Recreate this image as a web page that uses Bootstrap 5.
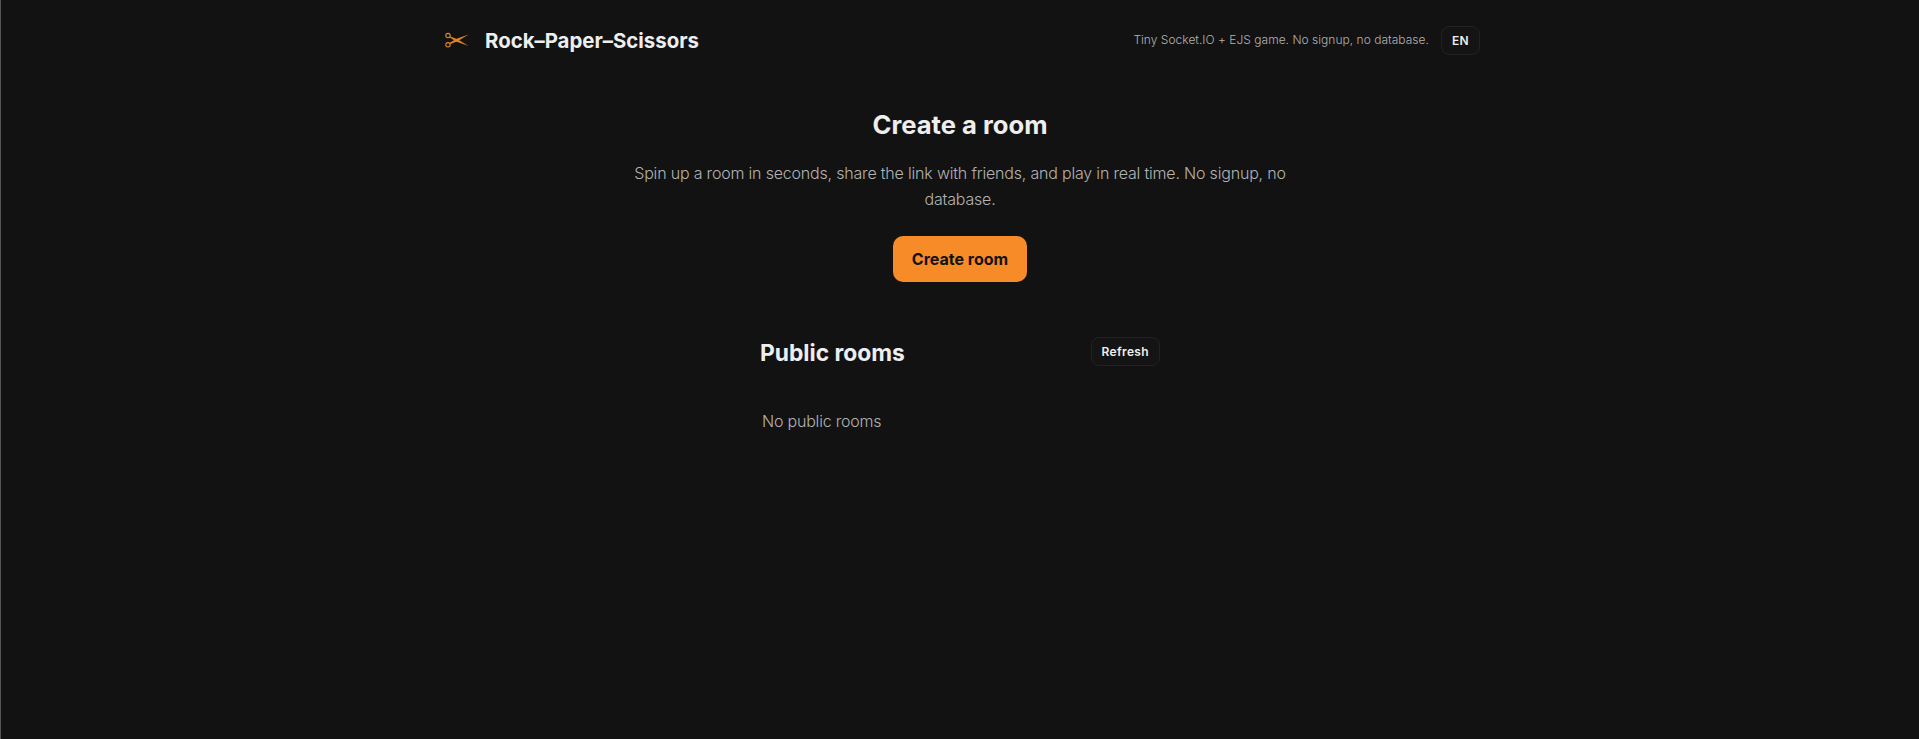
<!DOCTYPE html>
<html lang="en">
<head>
  <meta charset="UTF-8" />
  <meta name="viewport" content="width=device-width, initial-scale=1" />
  <title>Rock–Paper–Scissors</title>
  <link href="https://cdn.jsdelivr.net/npm/bootstrap@5.3.3/dist/css/bootstrap.min.css" rel="stylesheet" />
  <style>
    html, body { height: 100%; }
    body { background: #121212; color: #eeeeee; font-family: Inter, "Liberation Sans", sans-serif; border-left: 1px solid #555; }
    .page-wrap { max-width: 1040px; }
    .top-bar { height: 80px; }
    .brand-name { font-size: 20.4px; font-weight: 700; color: #eeeeee; margin-left: 16px; margin-top: 2px; }
    .tagline { font-size: 12px; font-weight: 300; letter-spacing: .02px; color: #b3b3b3; margin-right: 12px; }
    .btn-ghost { background: #141414; border: 1px solid #222; color: #eeeeee; font-weight: 600; font-size: 12px; letter-spacing: .03em; border-radius: 8px; padding: 0 10px; height: 29px; line-height: 27px; }
    .btn-ghost:hover { background: #1c1c1c; color: #fff; border-color: #333; }
    .hero { padding-top: 28px; }
    .hero-title { font-size: 25.6px; font-weight: 700; line-height: 34px; margin-bottom: 19px; }
    .hero-text { width: 680px; font-size: 16px; font-weight: 300; letter-spacing: -.19px; line-height: 25.6px; color: #b3b3b3; margin-bottom: 24px; }
    .btn-create { background: #f68b27; border: 0; color: #121212; font-weight: 700; font-size: 16px; border-radius: 10px; height: 46px; width: 134px; }
    .btn-create:hover { background: #ff9736; color: #121212; }
    .rooms { width: 400px; margin-top: 53px; }
    .rooms-title { font-size: 22.8px; font-weight: 700; line-height: 30px; margin: 3px 0 -1px; }
    .rooms-empty { color: #b3b3b3; font-size: 16px; font-weight: 300; letter-spacing: -.2px; margin: 42px 0 0 2px; line-height: 24px; }
  </style>
</head>
<body>
  <div class="page-wrap mx-auto">
    <header class="top-bar d-flex align-items-center justify-content-between">
      <div class="d-flex align-items-center">
        <svg class="ms-1" width="25" height="18" viewBox="0 0 25 18" fill="none" aria-hidden="true">
          <circle cx="4" cy="4.6" r="2.2" stroke="#e08525" stroke-width="1.1" />
          <circle cx="4" cy="13.8" r="2.2" stroke="#e08525" stroke-width="1.1" />
          <polygon fill="#e08525" points="5.8,5.2 14,8.4 24.6,15 12,10.4 5.4,6.3" />
          <polygon fill="#e08525" points="5.8,13.2 14,10 24.6,3.4 12,8 5.4,12.1" />
        </svg>
        <span class="brand-name">Rock–Paper–Scissors</span>
      </div>
      <div class="d-flex align-items-center">
        <span class="tagline">Tiny Socket.IO + EJS game. No signup, no database.</span>
        <button class="btn btn-ghost" type="button">EN</button>
      </div>
    </header>

    <section class="hero d-flex flex-column align-items-center text-center">
      <h1 class="hero-title">Create a room</h1>
      <p class="hero-text">Spin up a room in seconds, share the link with friends, and play in real time. No signup, no database.</p>
      <button class="btn btn-create" type="button">Create room</button>
    </section>

    <section class="rooms mx-auto">
      <div class="d-flex align-items-center justify-content-between">
        <h2 class="rooms-title">Public rooms</h2>
        <button class="btn btn-ghost" type="button">Refresh</button>
      </div>
      <p class="rooms-empty">No public rooms</p>
    </section>
  </div>
  <script src="https://cdn.jsdelivr.net/npm/bootstrap@5.3.3/dist/js/bootstrap.bundle.min.js"></script>
</body>
</html>
